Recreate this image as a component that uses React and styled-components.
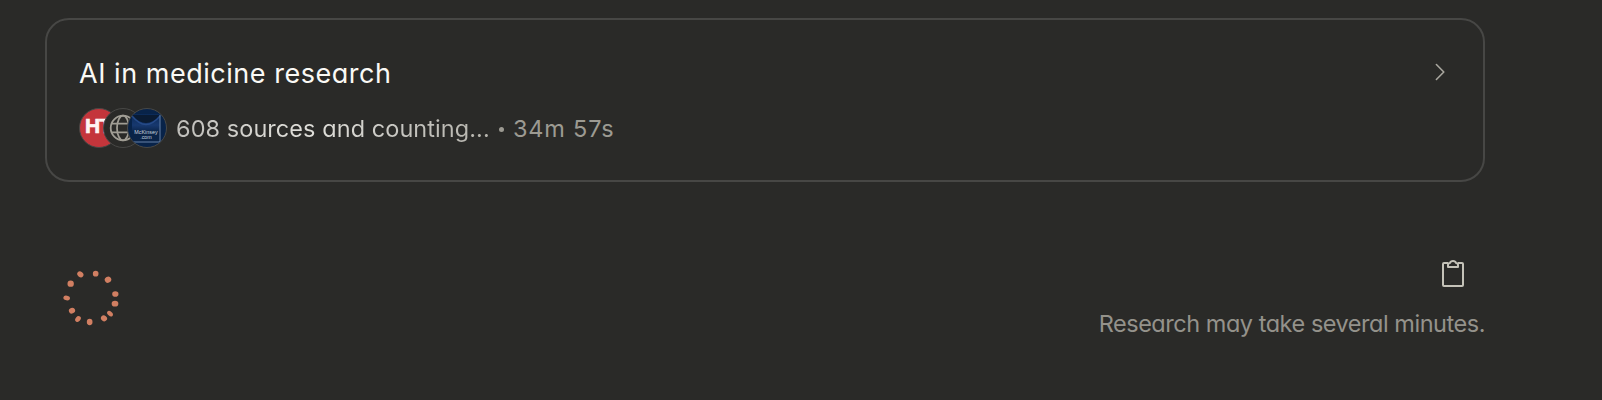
import React from "react";
import styled, { createGlobalStyle } from "styled-components";

const GlobalStyle = createGlobalStyle`
  *, *::before, *::after { box-sizing: border-box; }
  body {
    margin: 0;
    background: #2a2a28;
    font-family: Inter, "Liberation Sans", sans-serif;
    font-feature-settings: "cv11";
  }
`;

const Page = styled.main`
  height: 400px;
  padding: 18px 117px 0 45px;
  overflow: hidden;
  background: #2a2a28;
`;

const Card = styled.section`
  display: flex;
  justify-content: space-between;
  height: 164px;
  padding: 37px 36px 0 32px;
  border: 2px solid #474745;
  border-radius: 24px;
`;

const CardBody = styled.div`
  display: flex;
  flex-direction: column;
  gap: 17px;
`;

const Title = styled.h1`
  margin: 0;
  font-size: 27px;
  font-weight: 400;
  line-height: 34px;
  letter-spacing: 0.53px;
  white-space: nowrap;
  color: #faf9f5;
`;

const Meta = styled.div`
  display: flex;
  align-items: center;
  height: 40px;
  font-size: 23.5px;
  line-height: 32px;
  white-space: nowrap;
`;

const Sources = styled.div`
  display: flex;
  margin-right: 9px;
`;

const Favicon = styled.span`
  width: 40px;
  height: 40px;
  border: 1px solid #484846;
  border-radius: 50%;
  overflow: hidden;
  background: ${(p) => p.$fill};
  & + & { margin-left: -16px; }
  svg { display: block; }
`;

const Count = styled.span`
  width: 315px;
  padding-top: 2px;
  letter-spacing: 0.06px;
  color: transparent;
  background: linear-gradient(90deg, #bebdb9 0%, #dad9d4 30%, #dfded9 45%, #c6c5c0 72%, #b5b3ac 100%);
  background-clip: text;
  -webkit-background-clip: text;
`;

const Dot = styled.span`
  width: 5px;
  height: 5px;
  margin: 2px 9px 0 8px;
  border-radius: 50%;
  background: #9c9a92;
`;

const Elapsed = styled.span`
  padding-top: 2px;
  letter-spacing: 0.8px;
  color: #9c9a92;
`;

const Chevron = styled.svg`
  margin-top: 5px;
`;

const Status = styled.section`
  display: flex;
  justify-content: space-between;
  margin-top: 77px;
  padding-left: 5px;
`;

const Spinner = styled.svg`
  margin-top: 1px;
`;

const Notice = styled.div`
  display: flex;
  flex-direction: column;
  align-items: flex-end;
`;

const CopyButton = styled.button`
  display: flex;
  margin: 0 20px 0 0;
  padding: 0;
  border: 0;
  background: none;
`;

const Hint = styled.p`
  margin: 18px 0 0;
  font-size: 23.5px;
  line-height: 34px;
  letter-spacing: -0.47px;
  white-space: nowrap;
  color: #94928b;
`;

const marks = [
  [91, 43, 10, 8, 40],
  [137, 41, 8.5, 8.5, 0],
  [174, 59, 10, 9, -30],
  [62, 71, 9.5, 9.5, 0],
  [196, 102, 9.5, 8.5, 0],
  [50, 114, 10, 7, 12],
  [195, 131, 10, 8.5, 0],
  [66, 152, 9.5, 8.5, -20],
  [180, 161, 10, 6.5, 42],
  [84, 177, 9.5, 7.5, -50],
  [162, 175, 9.5, 8.5, 40],
  [119, 186, 8.5, 9.5, 0],
];

export default function App() {
  return (
    <>
      <GlobalStyle />
      <Page>
        <Card>
          <CardBody>
            <Title>AI in medicine research</Title>
            <Meta>
              <Sources>
                <Favicon $fill="#c4353b">
                  <svg width="38" height="38" viewBox="0 0 38 38">
                    <text x="5" y="24" fontFamily="Liberation Sans, sans-serif" fontSize="21" fontWeight="700" letterSpacing="-1" fill="#fff5f3" stroke="#fff5f3" strokeWidth="0.7">HT</text>
                  </svg>
                </Favicon>
                <Favicon $fill="#2a2a28">
                  <svg width="38" height="38" viewBox="0 0 38 38" fill="none" stroke="#a09d94" strokeWidth="1.8">
                    <circle cx="19" cy="19" r="12.3" />
                    <ellipse cx="19" cy="19" rx="6" ry="12.3" />
                    <path d="M8 14.7h22M8 23.3h22" />
                  </svg>
                </Favicon>
                <Favicon $fill="#082349">
                  <svg width="38" height="38" viewBox="0 0 38 38">
                    <defs>
                      <linearGradient id="fold" x1="0" y1="0" x2="0" y2="1">
                        <stop offset="0" stopColor="#0b2a57" />
                        <stop offset="0.4" stopColor="#17386f" />
                        <stop offset="0.65" stopColor="#0a2347" />
                        <stop offset="1" stopColor="#0a2347" />
                      </linearGradient>
                    </defs>
                    <rect x="4" y="5" width="28" height="28" fill="url(#fold)" />
                    <path d="M4 6Q18 22 32 6Z" fill="#0a1b33" />
                    <path d="M4 7Q18 24 32 7" fill="none" stroke="#264a88" strokeWidth="1.3" />
                    <path d="M32 6V33H4" fill="none" stroke="#6682a8" strokeWidth="1" />
                    <text x="18" y="24.5" textAnchor="middle" fontFamily="Liberation Sans, sans-serif" fontSize="5.4" fill="#c9d2df">McKinsey</text>
                    <text x="18" y="29.6" textAnchor="middle" fontFamily="Liberation Sans, sans-serif" fontSize="5.4" fill="#c9d2df">.com</text>
                  </svg>
                </Favicon>
              </Sources>
              <Count>608 sources and counting...</Count>
              <Dot />
              <Elapsed>34m 57s</Elapsed>
            </Meta>
          </CardBody>
          <Chevron width="12" height="20" viewBox="0 0 12 20" fill="none" stroke="#a9a79f" strokeWidth="1.6" strokeLinecap="round" strokeLinejoin="round">
            <path d="M1.4 2.5L8.8 10L1.4 17.5" />
          </Chevron>
        </Card>
        <Status>
          <Spinner width="80" height="76" viewBox="0 0 240 228" fill="#d17f62">
            {marks.map(([x, y, rx, ry, angle]) => (
              <ellipse key={`${x}-${y}`} cx={x} cy={y} rx={rx} ry={ry} transform={`rotate(${angle} ${x} ${y})`} />
            ))}
          </Spinner>
          <Notice>
            <CopyButton aria-label="Copy">
              <svg width="24" height="30" viewBox="0 0 24 30" fill="none" stroke="#c4c2b8" strokeWidth="2" strokeLinejoin="round">
                <path d="M7 4H3Q2 4 2 5V26Q2 27 3 27H21Q22 27 22 26V5Q22 4 21 4H17" />
                <path d="M7 8V6Q7 4 9 4Q9.600 2 12 2Q14.400 2 15 4Q17 4 17 6V8Z" />
              </svg>
            </CopyButton>
            <Hint>Research may take several minutes.</Hint>
          </Notice>
        </Status>
      </Page>
    </>
  );
}
